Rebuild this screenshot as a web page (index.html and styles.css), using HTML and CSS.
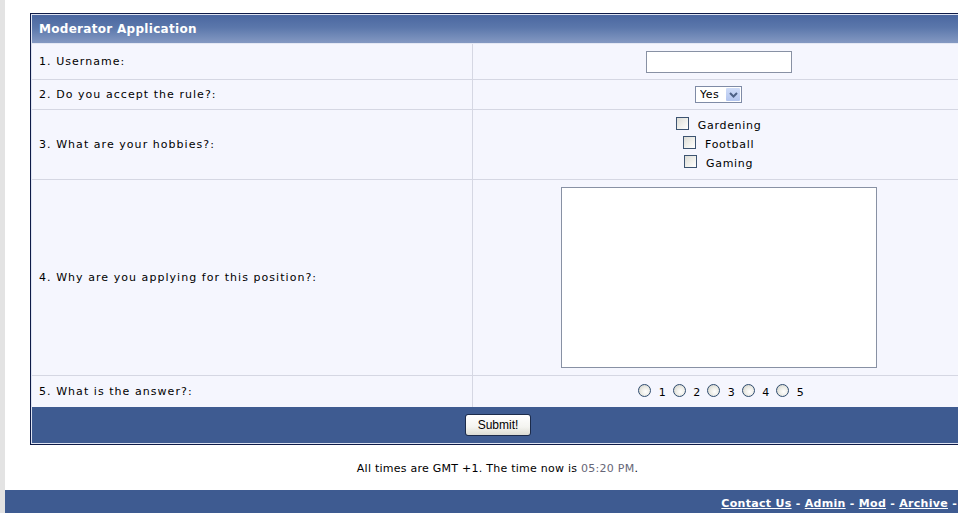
FILE: index.html
```html
<!DOCTYPE html>
<html>
<head>
    <title>Moderator Application</title>
    <link rel="stylesheet" href="styles.css">
</head>
<body>
    <div class="page">
        <form class="app-form">
        <table class="forumline">
            <tr>
                <th colspan="2" class="cat-head">Moderator Application</th>
            </tr>
            <tr class="row-user">
                <td class="q">1. Username:</td>
                <td class="a"><input type="text" class="post-text"></td>
            </tr>
            <tr class="row-rule">
                <td class="q">2. Do you accept the rule?:</td>
                <td class="a">
                    <span class="select-wrap">
                        <select class="post-select">
                            <option>Yes</option>
                            <option>No</option>
                        </select>
                        <span class="select-arrow">
                            <svg width="9" height="6" viewBox="0 0 9 6"><path d="M1 1 L4.5 4.5 L8 1" fill="none" stroke="#4d6185" stroke-width="2"/></svg>
                        </span>
                    </span>
                </td>
            </tr>
            <tr class="row-hobby">
                <td class="q">3. What are your hobbies?:</td>
                <td class="a">
                    <label class="opt"><input type="checkbox" class="xp-check"> Gardening</label><br>
                    <label class="opt"><input type="checkbox" class="xp-check"> Football</label><br>
                    <label class="opt"><input type="checkbox" class="xp-check"> Gaming</label>
                </td>
            </tr>
            <tr class="row-why">
                <td class="q">4. Why are you applying for this position?:</td>
                <td class="a"><textarea class="post-area"></textarea></td>
            </tr>
            <tr class="row-answer">
                <td class="q">5. What is the answer?:</td>
                <td class="a radios"><input type="radio" name="ans" class="xp-radio"> 1<input type="radio" name="ans" class="xp-radio"> 2<input type="radio" name="ans" class="xp-radio"> 3<input type="radio" name="ans" class="xp-radio"> 4<input type="radio" name="ans" class="xp-radio"> 5</td>
            </tr>
            <tr>
                <td colspan="2" class="cat-bottom"><button type="button" class="main-btn">Submit!</button></td>
            </tr>
        </table>
        </form>

        <div class="gmt">All times are GMT +1. The time now is <span class="time">05:20 PM</span>.</div>

        <div class="bottom-bar">
            <a href="#">Contact Us</a> - <a href="#">Admin</a> - <a href="#">Mod</a> - <a href="#">Archive</a> -
        </div>
    </div>
</body>
</html>
```

FILE: styles.css
```css
html, body {
    margin: 0;
    padding: 0;
    overflow: hidden;
}
body {
    background-color: #e3e3e3;
    font-family: "DejaVu Sans", Verdana, sans-serif;
    font-size: 11px;
    color: #000;
}
.page {
    margin-left: 5px;
    width: 985px;
    background-color: #fff;
    padding-top: 13px;
    min-height: 600px;
}
.app-form {
    margin: 0;
}
.forumline {
    margin-left: 25px;
    width: 936px;
    border: 1px solid #0e1b48;
    padding: 1px;
    background-color: #dfe4f2;
    border-collapse: separate;
    border-spacing: 0;
}
.cat-head {
    height: 28px;
    padding: 0 0 0 7px;
    text-align: left;
    font-size: 12px;
    font-weight: bold;
    letter-spacing: 0.3px;
    color: #fff;
    background: linear-gradient(to bottom, #4a67a0 0%, #5b77ab 45%, #8499c2 100%);
    border-bottom: 1px solid #e4e8f4;
}
.q, .a {
    background-color: #f5f6fe;
    border-bottom: 1px solid #d5d7e3;
    padding: 0 7px;
}
.q {
    width: 426px;
    border-right: 1px solid #d5d7e3;
    letter-spacing: 1.05px;
}
.a {
    text-align: center;
}
.row-user td { height: 35px; }
.row-rule td { height: 29px; }
.row-hobby td { height: 69px; line-height: 19px; }
.row-why td { height: 195px; }
.row-answer td { height: 31px; border-bottom: none; }

.post-text {
    width: 146px;
    height: 22px;
    box-sizing: border-box;
    border: 1px solid #8891a4;
    background: #fff;
    margin: 0;
    vertical-align: middle;
}
.select-wrap {
    position: relative;
    display: inline-block;
    vertical-align: middle;
}
.post-select {
    -webkit-appearance: none;
    appearance: none;
    width: 47px;
    height: 17px;
    box-sizing: border-box;
    border: 1px solid #7f8ba6;
    background: #fff;
    font-family: "DejaVu Sans", Verdana, sans-serif;
    font-size: 11px;
    letter-spacing: 0.5px;
    padding: 0 0 0 4px;
    margin: 0;
    color: #000;
}
.select-arrow {
    position: absolute;
    top: 2px;
    right: 2px;
    width: 14px;
    height: 13px;
    background: linear-gradient(to bottom, #cfdcf8, #b3c5ee);
    border-radius: 1px;
    display: flex;
    align-items: center;
    justify-content: center;
}
.opt {
    white-space: nowrap;
    letter-spacing: 0.7px;
}
.xp-check {
    -webkit-appearance: none;
    appearance: none;
    width: 13px;
    height: 13px;
    margin: 0 5px 0 0;
    border: 1px solid #3c5371;
    background: linear-gradient(135deg, #dcdcd6 0%, #f2f2ee 60%, #ffffff 100%);
    vertical-align: -1px;
    box-sizing: border-box;
}
.post-area {
    width: 316px;
    height: 181px;
    box-sizing: border-box;
    border: 1px solid #8891a4;
    background: #fff;
    margin: 0;
    resize: none;
    vertical-align: middle;
}
.radios {
    white-space: nowrap;
    letter-spacing: 1px;
}
.xp-radio {
    -webkit-appearance: none;
    appearance: none;
    width: 13px;
    height: 13px;
    margin: 0 3px 0 6px;
    border: 1px solid #2f4c6f;
    border-radius: 50%;
    background: radial-gradient(circle at 60% 60%, #ffffff 0%, #ecece6 45%, #c9c9c0 100%);
    box-sizing: border-box;
    vertical-align: -1px;
}
.cat-bottom {
    height: 36px;
    background-color: #3e5b91;
    text-align: center;
    padding: 0;
}
.main-btn {
    font-family: "Liberation Sans", Arial, sans-serif;
    font-size: 12px;
    color: #000;
    width: 66px;
    height: 22px;
    padding: 0;
    border: 1px solid #1c2b4a;
    border-radius: 3px;
    background: linear-gradient(to bottom, #ffffff 0%, #f4f4f0 60%, #dcdcd4 100%);
    cursor: pointer;
}
.gmt {
    text-align: center;
    font-size: 11px;
    letter-spacing: 0.25px;
    padding-top: 17px;
    height: 28px;
    box-sizing: content-box;
}
.time {
    color: #666677;
}
.bottom-bar {
    background-color: #3e5b91;
    color: #fff;
    text-align: right;
    font-size: 11px;
    font-weight: bold;
    letter-spacing: 0.3px;
    padding: 7px 33px 6px 0;
}
.bottom-bar a {
    color: #fff;
    text-decoration: underline;
}
```
